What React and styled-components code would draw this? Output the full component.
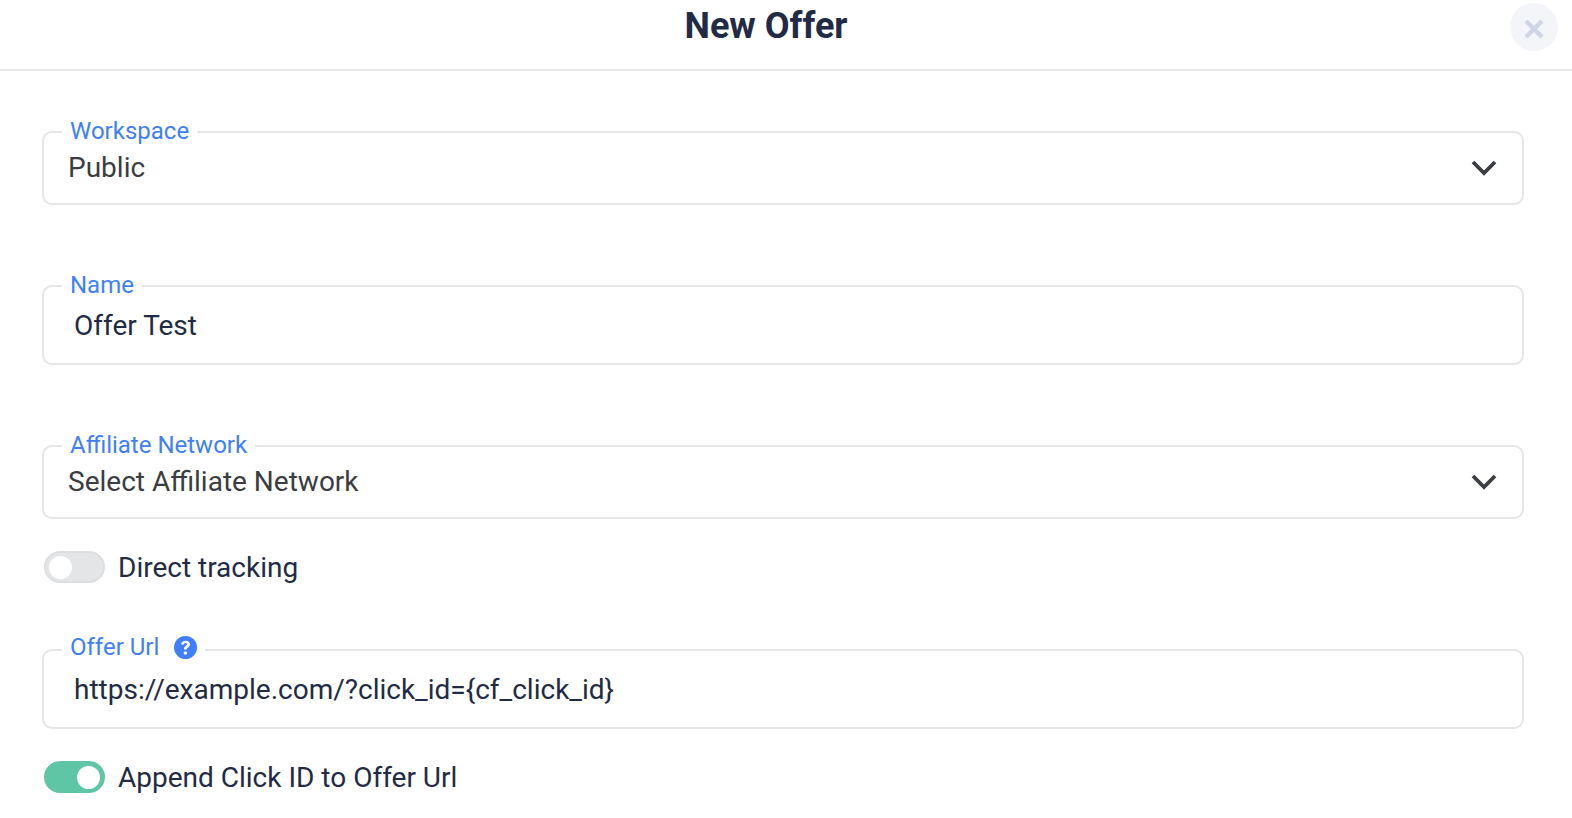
import React from "react";
import styled, { createGlobalStyle } from "styled-components";

const GlobalStyle = createGlobalStyle`
  html, body {
    margin: 0;
    padding: 0;
    background: #fff;
    font-family: Roboto, "Liberation Sans", sans-serif;
    overflow: hidden;
  }
`;

const Page = styled.div`
  width: 1572px;
  height: 818px;
  overflow: hidden;
`;

const Header = styled.header`
  position: relative;
  height: 69px;
  border-bottom: 2px solid #e6e7e8;
  display: flex;
  justify-content: center;
  padding-right: 40px;
  box-sizing: content-box;
`;

const Title = styled.h1`
  margin: 0;
  font-size: 36px;
  line-height: 52px;
  font-weight: 700;
  color: #222b45;
`;

const CloseButton = styled.button`
  position: absolute;
  top: 3px;
  left: 1510px;
  width: 48px;
  height: 48px;
  border: 0;
  border-radius: 50%;
  padding: 3px 0 0;
  background: #f4f5f9;
  display: flex;
  align-items: center;
  justify-content: center;
`;

const Form = styled.form`
  display: flex;
  flex-direction: column;
  padding: 46px 48px 0 42px;
`;

const Field = styled.fieldset`
  margin: ${(p) => p.$top}px 0 0;
  padding: 0 25px 0 ${(p) => p.$pad}px;
  height: ${(p) => p.$height}px;
  box-sizing: border-box;
  border: 2px solid #e6e6e6;
  border-radius: 10px;
  display: block;
  min-width: 0;
`;

const Legend = styled.legend`
  margin-left: ${(p) => p.$shift}px;
  padding: 0 8px ${(p) => p.$lift || 2}px;
  font-size: 24px;
  line-height: 28px;
  color: #3f7ffb;
  display: flex;
  align-items: center;
  gap: 15px;
`;

const SelectRow = styled.div`
  display: flex;
  align-items: center;
  justify-content: space-between;
  font-size: 28px;
  line-height: 36px;
  color: #3a3d42;
  height: 36px;
  margin-top: 3px;
`;

const InputText = styled.div`
  font-size: 28px;
  line-height: 36px;
  height: 36px;
  color: #222b45;
  margin-top: ${(p) => p.$top}px;
`;

const ToggleRow = styled.div`
  display: flex;
  align-items: center;
  gap: 13px;
  height: 32px;
  margin-top: 32px;
  margin-left: 2px;
  font-size: 28px;
  color: #222b45;
`;

const Track = styled.span`
  width: 61px;
  height: 32px;
  box-sizing: border-box;
  border-radius: 16px;
  border: 2px solid ${(p) => (p.$on ? "#5fc6a5" : "#dcdee1")};
  background: ${(p) => (p.$on ? "#5fc6a5" : "#e4e5e7")};
  display: flex;
  align-items: center;
  justify-content: ${(p) => (p.$on ? "flex-end" : "flex-start")};
  padding: 0 3px;
`;

const Knob = styled.span`
  width: 23px;
  height: 23px;
  border-radius: 50%;
  background: #fff;
`;

const Chevron = () => (
  <svg width="26" height="16" viewBox="0 0 26 16" fill="none">
    <path d="M2 2l11 11L24 2" stroke="#3a3d42" strokeWidth="3.8" />
  </svg>
);

const CloseIcon = () => (
  <svg width="20" height="20" viewBox="0 0 20 20" fill="none">
    <path d="M2 2l16 16M18 2L2 18" stroke="#d0d5e6" strokeWidth="4.4" />
  </svg>
);

const HelpIcon = () => (
  <svg width="23" height="23" viewBox="0 0 22 22">
    <circle cx="11" cy="11" r="11" fill="#3f7ffb" />
    <path
      d="M6.8 8.2c.2-2.3 1.9-3.7 4.3-3.7 2.5 0 4.2 1.4 4.2 3.4 0 1.4-.7 2.2-1.8 3-.9.6-1.2 1-1.2 1.9H9.5c0-1.6.4-2.4 1.6-3.2.9-.6 1.2-1 1.2-1.6 0-.8-.5-1.2-1.3-1.2s-1.4.5-1.5 1.4z"
      fill="#fff"
    />
    <circle cx="10.9" cy="16.2" r="1.7" fill="#fff" />
  </svg>
);

const App = () => {
  return (
    <Page>
      <GlobalStyle />
      <Header>
        <Title>New Offer</Title>
        <CloseButton type="button">
          <CloseIcon />
        </CloseButton>
      </Header>
      <Form>
        <Field $top={0} $height={88} $pad={24}>
          <Legend $shift={-6}>Workspace</Legend>
          <SelectRow>
            Public
            <Chevron />
          </SelectRow>
        </Field>
        <Field $top={66} $height={94} $pad={30}>
          <Legend $shift={-12}>Name</Legend>
          <InputText $top={7}>Offer Test</InputText>
        </Field>
        <Field $top={66} $height={88} $pad={24}>
          <Legend $shift={-6}>Affiliate Network</Legend>
          <SelectRow>
            Select Affiliate Network
            <Chevron />
          </SelectRow>
        </Field>
        <ToggleRow>
          <Track>
            <Knob />
          </Track>
          Direct tracking
        </ToggleRow>
        <Field $top={50} $height={96} $pad={30}>
          <Legend $shift={-12} $lift={6}>
            Offer Url
            <HelpIcon />
          </Legend>
          <InputText $top={5}>{"https://example.com/?click_id={cf_click_id}"}</InputText>
        </Field>
        <ToggleRow>
          <Track $on>
            <Knob />
          </Track>
          Append Click ID to Offer Url
        </ToggleRow>
      </Form>
    </Page>
  );
};

export default App;
